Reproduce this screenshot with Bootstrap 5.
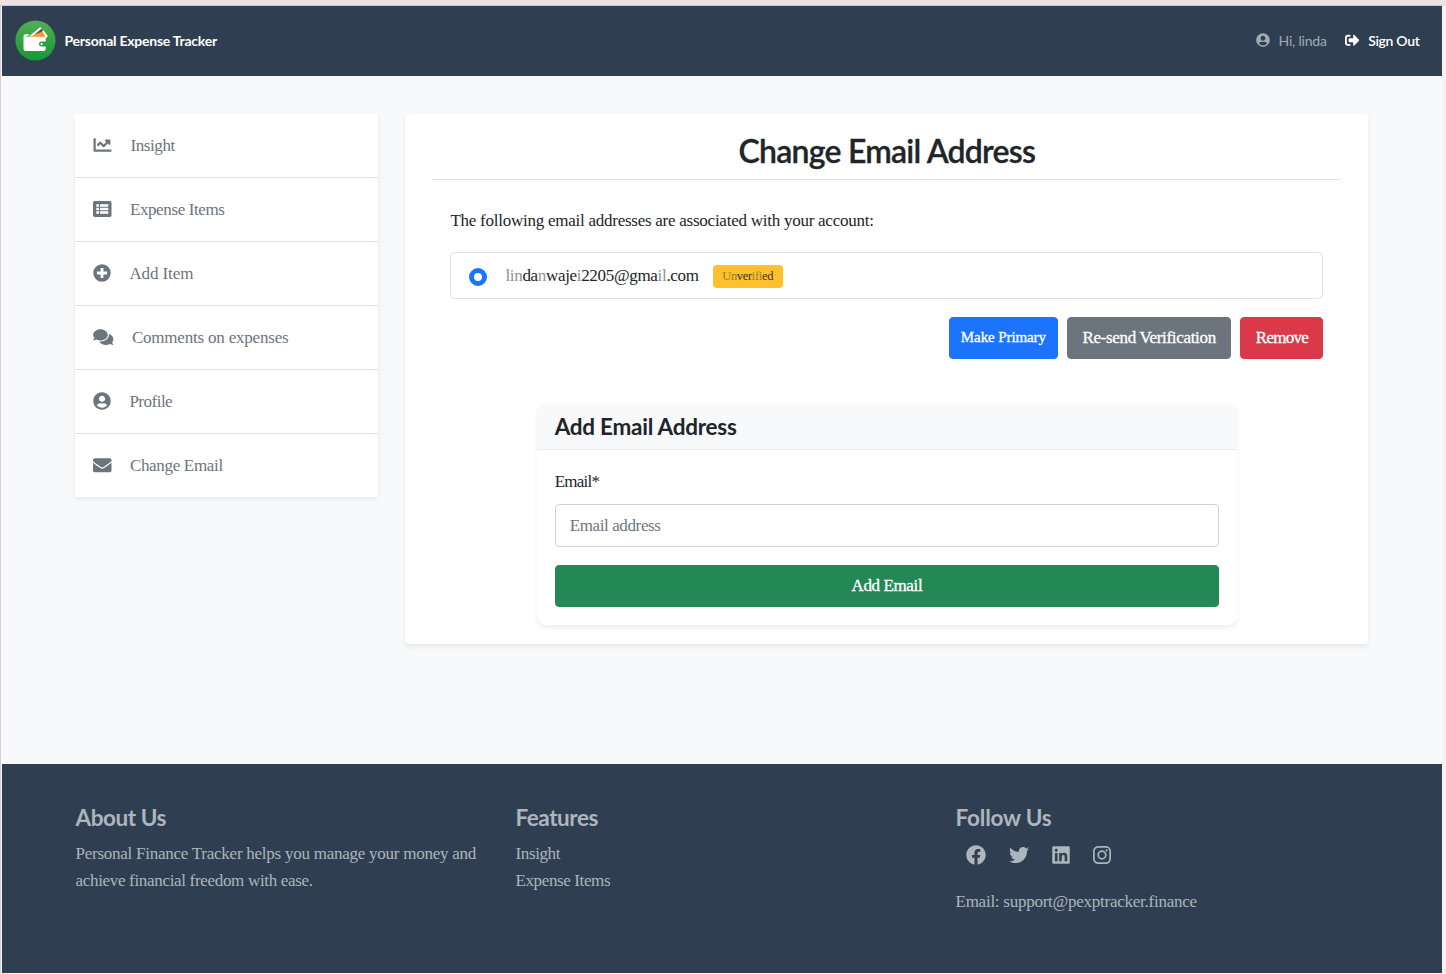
<!DOCTYPE html>
<html lang="en">
<head>
<meta charset="utf-8">
<meta name="viewport" content="width=device-width, initial-scale=1">
<title>Change Email Address | Personal Expense Tracker</title>
<link href="https://cdn.jsdelivr.net/npm/bootstrap@5.3.0/dist/css/bootstrap.min.css" rel="stylesheet">
<style>
  html { font-size: 18px; }
  body {
    font-family: "Liberation Serif", serif;
    background: #ece2e4;
    height: 974px;
    overflow: hidden;
    padding: 5px 4px 0 0;
  }
  .page-frame {
    height: 968px;
    background: #f8f9fb;
    border-left: 1px solid #d5ced2;
    padding-left: 1px;
    border-top: 1px solid #c9cdd0;
    box-shadow: 4px 1px 0 #faf0f3, 0 1px 0 #dfe3e8;
  }
  h2, h5, .ui-sans { font-family: Lato, sans-serif; }
  .serif-text { font-size: 17px; line-height: 27px; letter-spacing: -.25px; }
  .ls-a { letter-spacing: -.1px; }
  .ls-b { letter-spacing: -.2px; }
  .ls-c { letter-spacing: -.32px; }
  .ls-d { letter-spacing: -.38px; }
  .ls-e { letter-spacing: -.5px; }
  .ls-f { letter-spacing: -.75px; }
  .bg-slate { background: #2f3f51; }
  .top-nav { height: 70px; padding: 0 22.5px 2px 13px; font-size: 14px; }
  .top-nav .brand-name { letter-spacing: -.24px; margin-left: 8.5px; }
  .greeting { color: #a2abb3; }
  .icon { fill: currentColor; flex: none; display: block; }
  .main-area { height: 688px; padding: 37.5px .25px 0 0; }
  .side-menu { --bs-list-group-color: #6c757d; --bs-list-group-border-color: #dee2e6; --bs-list-group-border-radius: 2px; }
  .side-menu .list-group-item { padding: 18px; height: 64px; }
  .side-menu .list-group-item:last-child { height: 63px; }
  .side-menu .icon { margin-right: 18px; }
  .panel { height: 530.5px; border-radius: 4px; }
  .panel h2 { font-size: 32px; font-weight: 600; letter-spacing: -.76px; line-height: 38.4px; color: #212529; -webkit-text-stroke: .3px currentColor; }
  .email-row { height: 47px; padding-left: 18px; }
  .email-row .form-check-input { width: 18px; height: 18px; margin: 4px 0 0; border: 5.4px solid #1b74fb; background: #fff; }
  .thin { opacity: .5; }
  .tag-unverified { background: #ffc02e; color: #3a3421; font-size: 12.5px; font-weight: 400; width: 70px; height: 23px; line-height: 23px; padding: 0; margin: 2px 0 0 14px; border-radius: 4px; letter-spacing: -.33px; }
  .btn { height: 42.5px; padding: 5.5px 0 7.5px; border-radius: 4px; -webkit-text-stroke: .3px currentColor; }
  .btn-primary { --bs-btn-bg: #1b74fb; --bs-btn-border-color: #1b74fb; width: 109px; font-size: 15px; padding-top: 6.5px; letter-spacing: -.1px; }
  .btn-secondary { width: 164.5px; }
  .btn-danger { --bs-btn-bg: #db394a; --bs-btn-border-color: #db394a; width: 83px; }
  .btn-success { --bs-btn-bg: #218856; --bs-btn-border-color: #218856; }
  .add-card { border-radius: 9px; }
  .add-card .card-header { background: #f8f9fb; padding: 9px 18px; height: 46px; border-color: #e9ebee; border-radius: 9px 9px 0 0; }
  h5 { font-size: 22.5px; font-weight: 700; line-height: 27px; letter-spacing: -.25px; }
  .form-control { height: 42.5px; border-radius: 4px; border-color: #ced4da; padding: 0 14px; }
  .form-control::placeholder { color: #6c757d; }
  footer { height: 208.5px; padding-top: 40px; color: #adb5bd; }
  footer h5 { letter-spacing: -.45px; margin-bottom: 8.5px; }
  .social { padding-left: 10px; height: 30px; gap: 23.3px; margin-bottom: 18px; }
</style>
</head>
<body>
<div class="page-frame d-flex flex-column">
  <nav class="top-nav bg-slate ui-sans d-flex align-items-center justify-content-between">
    <a class="d-flex align-items-center text-white text-decoration-none fw-bold" href="#">
      <svg width="41" height="41" viewBox="0 0 41 41" class="d-block">
        <defs><linearGradient id="lg" x1="0" y1="0" x2="0" y2="1"><stop offset="0" stop-color="#54ad55"/><stop offset="1" stop-color="#129a35"/></linearGradient></defs>
        <circle cx="20.5" cy="20.500" r="20" fill="url(#lg)"/>
        <!-- cards tucked into the wallet -->
        <path d="M14 16.500 25.200 7 27.200 9.200 19 17z" fill="#fff"/>
        <path d="M17.500 16.500 26.300 8.800 28.400 11 22 17z" fill="#4d4b5c"/>
        <path d="M28 9.800 32.800 16 31.200 18.200 26 14z" fill="#fff"/>
        <path d="M14 17 27.800 11.200 30.300 17z" fill="#ff9a2e"/>
        <!-- wallet body and clasp -->
        <path d="M10.500 14.200H14.500L12.500 16.800H28.500Q30.700 16.800 30.700 18.800V28.500Q30.700 31 28.200 31H11Q8.500 31 8.500 28.500V16Q8.500 14.200 10.500 14.200z" fill="#fff"/>
        <path d="M10.300 16.500 13.300 15.200 12.300 16.800z" fill="#36a24a"/>
        <path d="M26.500 21.600H31V26.600H26.500a2.500 2.500 0 0 1 0-5z" fill="#2aa045"/>
        <circle cx="26.600" cy="24.100" r="1.100" fill="#fff"/>
      </svg>
      <span class="brand-name">Personal Expense Tracker</span>
    </a>
    <div class="d-flex align-items-center">
      <span class="greeting d-flex align-items-center">
        <svg class="icon me-2" width="14" height="14" viewBox="0 0 496 512"><path d="M248 8C111 8 0 119 0 256s111 248 248 248 248-111 248-248S385 8 248 8zm0 96c48.6 0 88 39.4 88 88s-39.4 88-88 88-88-39.4-88-88 39.4-88 88-88zm0 344c-58.7 0-111.3-26.6-146.5-68.2 18.8-35.4 55.6-59.8 98.5-59.8 2.4 0 4.8.4 7.1 1.1 13 4.2 26.6 6.9 40.9 6.9 14.3 0 28-2.7 40.9-6.9 2.3-.7 4.7-1.1 7.1-1.1 42.9 0 79.7 24.4 98.5 59.8C359.3 421.4 306.7 448 248 448z"/></svg>
        <span class="ls-b">Hi, linda</span>
      </span>
      <a class="d-flex align-items-center text-white text-decoration-none fw-semibold ms-3" href="#">
        <svg class="icon me-2" width="14.5" height="14.5" viewBox="0 0 512 512"><path d="M497 273L329 441c-15 15-41 4.5-41-17v-96H152c-13.3 0-24-10.7-24-24v-96c0-13.3 10.7-24 24-24h136V88c0-21.4 25.9-32 41-17l168 168c9.3 9.4 9.3 24.6 0 34zM192 436v-40c0-6.6-5.4-12-12-12H96c-17.7 0-32-14.3-32-32V160c0-17.7 14.3-32 32-32h84c6.6 0 12-5.4 12-12V76c0-6.6-5.4-12-12-12H96c-53 0-96 43-96 96v192c0 53 43 96 96 96h84c6.6 0 12-5.4 12-12z"/></svg>
        <span class="ls-c">Sign Out</span>
      </a>
    </div>
  </nav>

  <main class="main-area">
    <div class="container">
      <div class="row">
        <div class="col-3">
          <div class="list-group list-group-flush side-menu shadow-sm serif-text">
            <a class="list-group-item d-flex align-items-center ls-d" href="#"><svg class="icon" width="19" height="18" viewBox="0 0 512 512"><path d="M496 384H64V80c0-8.84-7.16-16-16-16H16C7.16 64 0 71.16 0 80v336c0 17.67 14.33 32 32 32h464c8.84 0 16-7.16 16-16v-32c0-8.84-7.16-16-16-16zM464 96H345.94c-21.38 0-32.09 25.85-16.97 40.97l32.4 32.4L288 242.75l-73.37-73.37c-12.5-12.5-32.76-12.5-45.25 0l-68.69 68.69c-6.25 6.25-6.25 16.38 0 22.63l22.62 22.62c6.25 6.25 16.38 6.25 22.63 0L192 237.25l73.37 73.37c12.5 12.5 32.76 12.5 45.25 0l96-96 32.4 32.4c15.12 15.12 40.97 4.41 40.97-16.97V112c.01-8.84-7.15-16-15.99-16z"/></svg>Insight</a>
            <a class="list-group-item d-flex align-items-center ls-d" href="#"><svg class="icon" width="18.5" height="18" viewBox="0 0 18.5 18"><rect y="1" width="18.5" height="16" rx="1.8"/><g fill="#fff"><path d="M3.3 4.300h2.700v2.500H3.300zM3.300 7.800h2.700v2.500H3.300zM3.300 11.300h2.700v2.500H3.300zM7 4.300h8.300v2.500H7zM7 7.800h8.300v2.500H7zM7 11.300h8.300v2.500H7z"/></g></svg>Expense Items</a>
            <a class="list-group-item d-flex align-items-center ls-a" href="#"><svg class="icon" width="18" height="18" viewBox="0 0 512 512"><path d="M256 8a248 248 0 1 0 0 496 248 248 0 0 0 0-496zm144 276c0 6.6-5.4 12-12 12h-92v92c0 6.6-5.4 12-12 12h-56c-6.6 0-12-5.4-12-12v-92h-92c-6.6 0-12-5.4-12-12v-56c0-6.6 5.4-12 12-12h92v-92c0-6.6 5.4-12 12-12h56c6.6 0 12 5.4 12 12v92h92c6.6 0 12 5.4 12 12z"/></svg>Add Item</a>
            <a class="list-group-item d-flex align-items-center ls-b" href="#"><svg class="icon" width="20.5" height="18" viewBox="0 0 576 512"><path d="M416 192c0-88.4-93.1-160-208-160S0 103.6 0 192c0 34.3 14.1 65.9 38 92-13.4 30.2-35.5 54.2-35.8 54.5-2.2 2.3-2.8 5.7-1.5 8.7S4.8 352 8 352c36.6 0 66.9-12.3 88.7-25 32.2 15.7 70.3 25 111.3 25 114.9 0 208-71.6 208-160zm122 220c23.9-26 38-57.7 38-92 0-66.9-53.5-124.2-129.3-148.1.9 6.6 1.3 13.3 1.3 20.1 0 105.9-107.7 192-240 192-10.8 0-21.3-.8-31.7-1.9C207.8 439.6 281.8 480 368 480c41 0 79.1-9.2 111.3-25 21.8 12.7 52.1 25 88.7 25 3.2 0 6.1-1.9 7.3-4.8 1.3-2.9.7-6.3-1.5-8.7-.3-.3-22.4-24.2-35.800-54.500z"/></svg>Comments on expenses</a>
            <a class="list-group-item d-flex align-items-center ls-e" href="#"><svg class="icon" width="18" height="18" viewBox="0 0 496 512"><path d="M248 8C111 8 0 119 0 256s111 248 248 248 248-111 248-248S385 8 248 8zm0 96c48.6 0 88 39.4 88 88s-39.4 88-88 88-88-39.4-88-88 39.4-88 88-88zm0 344c-58.7 0-111.3-26.6-146.5-68.2 18.8-35.4 55.6-59.8 98.5-59.8 2.4 0 4.8.4 7.1 1.1 13 4.2 26.6 6.9 40.9 6.9 14.3 0 28-2.7 40.9-6.9 2.3-.7 4.7-1.1 7.1-1.1 42.9 0 79.7 24.4 98.5 59.8C359.3 421.4 306.7 448 248 448z"/></svg>Profile</a>
            <a class="list-group-item d-flex align-items-center ls-c" href="#"><svg class="icon" width="18.5" height="18.5" viewBox="0 0 512 512"><path d="M502.3 190.8c3.9-3.1 9.7-.2 9.7 4.7V400c0 26.5-21.5 48-48 48H48c-26.5 0-48-21.5-48-48V195.6c0-5 5.7-7.8 9.7-4.7 22.4 17.4 52.1 39.5 154.1 113.6 21.1 15.4 56.7 47.8 92.2 47.6 35.7.3 72-32.8 92.3-47.6 102-74.1 131.6-96.3 154-113.7zM256 320c23.2.4 56.6-29.2 73.4-41.4 132.7-96.3 142.8-104.7 173.4-128.7 5.8-4.5 9.2-11.5 9.2-18.9v-19c0-26.5-21.5-48-48-48H48c-26.5 0-48 21.5-48 48v19c0 7.4 3.4 14.3 9.2 18.9 30.6 23.9 40.7 32.4 173.4 128.7 16.8 12.2 50.2 41.8 73.4 41.4z"/></svg>Change Email</a>
          </div>
        </div>

        <div class="col-9">
          <section class="panel bg-white shadow-sm serif-text pt-3 px-4">
            <h2 class="text-center pb-2 mb-4 border-bottom">Change Email Address</h2>
            <div class="px-3">
              <p class="mb-3 text-dark">The following email addresses are associated with your account:</p>
              <label class="email-row border rounded-1 d-flex align-items-center mb-3">
                <input class="form-check-input" type="radio" name="email">
                <span class="ms-3 ls-c"><span class="thin">lin</span>da<span class="thin">n</span>waje<span class="thin">i</span>2205@gma<span class="thin">il</span>.com</span>
                <span class="badge tag-unverified"><span class="thin">Un</span>ver<span class="thin">ifi</span>ed</span>
              </label>
              <div class="d-flex justify-content-end gap-2">
                <button class="btn btn-primary">Make Primary</button>
                <button class="btn btn-secondary serif-text ls-c">Re-send Verification</button>
                <button class="btn btn-danger serif-text ls-f">Remove</button>
              </div>
              <div class="row justify-content-center mx-0 mt-4 pt-3">
                <div class="col-10">
                  <div class="card add-card border-0 shadow-sm">
                    <div class="card-header"><h5 class="m-0">Add Email Address</h5></div>
                    <div class="card-body">
                      <label class="d-block mb-2 ls-f" for="em">Email*</label>
                      <input id="em" class="form-control serif-text ls-d mb-3" placeholder="Email address">
                      <button class="btn btn-success serif-text ls-d w-100">Add Email</button>
                    </div>
                  </div>
                </div>
              </div>
            </div>
          </section>
        </div>
      </div>
    </div>
  </main>

  <footer class="bg-slate serif-text">
    <div class="container">
      <div class="row">
        <div class="col-4">
          <h5>About Us</h5>
          <p class="m-0 text-nowrap">Personal Finance Tracker helps you manage your money and<br><span class="ls-c">achieve financial freedom with ease.</span></p>
        </div>
        <div class="col-4">
          <h5>Features</h5>
          <div class="ls-d">Insight</div>
          <div class="ls-d">Expense Items</div>
        </div>
        <div class="col-4">
          <h5 class="ls-b">Follow Us</h5>
          <div class="social d-flex align-items-center">
            <svg class="icon" width="20" height="20" viewBox="0 0 512 512"><path d="M504 256C504 119 393 8 256 8S8 119 8 256c0 123.78 90.69 226.38 209.25 245V327.69h-63V256h63v-54.64c0-62.15 37-96.48 93.67-96.48 27.14 0 55.52 4.84 55.52 4.84v61h-31.28c-30.8 0-40.41 19.12-40.41 38.73V256h68.78l-11 71.69h-57.78V501C413.31 482.38 504 379.78 504 256z"/></svg>
            <svg class="icon" width="20" height="20" viewBox="0 0 512 512"><path d="M459.37 151.716c.325 4.548.325 9.097.325 13.645 0 138.72-105.583 298.558-298.558 298.558-59.452 0-114.68-17.219-161.137-47.106 8.447.974 16.568 1.299 25.34 1.299 49.055 0 94.213-16.568 130.274-44.832-46.132-.975-84.792-31.188-98.112-72.772 6.498.974 12.995 1.624 19.818 1.624 9.421 0 18.843-1.3 27.614-3.573-48.081-9.747-84.143-51.98-84.143-102.985v-1.299c13.969 7.797 30.214 12.67 47.431 13.319-28.264-18.843-46.781-51.005-46.781-87.391 0-19.492 5.197-37.36 14.294-52.954 51.655 63.675 129.3 105.258 216.365 109.807-1.624-7.797-2.599-15.918-2.599-24.04 0-57.828 46.782-104.934 104.934-104.934 30.213 0 57.502 12.67 76.67 33.137 23.715-4.548 46.456-13.32 66.599-25.34-7.798 24.366-24.366 44.833-46.132 57.827 21.117-2.273 41.584-8.122 60.426-16.243-14.292 20.791-32.161 39.308-52.628 54.253z"/></svg>
            <svg class="icon" width="18" height="20" viewBox="0 0 448 512"><path d="M416 32H31.9C14.3 32 0 46.5 0 64.3v383.4C0 465.5 14.3 480 31.9 480H416c17.6 0 32-14.5 32-32.3V64.3c0-17.8-14.4-32.3-32-32.3zM135.4 416H69V202.2h66.5V416zm-33.2-243c-21.3 0-38.5-17.3-38.5-38.5S80.9 96 102.2 96c21.2 0 38.5 17.3 38.5 38.5 0 21.3-17.2 38.5-38.5 38.5zm282.1 243h-66.4V312c0-24.8-.5-56.7-34.5-56.7-34.6 0-39.9 27-39.9 54.9V416h-66.4V202.2h63.7v29.2h.9c8.9-16.8 30.6-34.5 62.9-34.5 67.2 0 79.7 44.3 79.7 101.9V416z"/></svg>
            <svg class="icon" width="18" height="18" viewBox="0 0 18 18"><g fill="none" stroke="currentColor" stroke-width="1.7"><rect x=".85" y=".85" width="16.3" height="16.3" rx="4.3"/><circle cx="9" cy="9" r="3.8"/></g><circle cx="13.7" cy="4.3" r="1.1"/></svg>
          </div>
          <div>Email: support@pexptracker.finance</div>
        </div>
      </div>
    </div>
  </footer>
</div>
<script src="https://cdn.jsdelivr.net/npm/bootstrap@5.3.0/dist/js/bootstrap.bundle.min.js"></script>
</body>
</html>
